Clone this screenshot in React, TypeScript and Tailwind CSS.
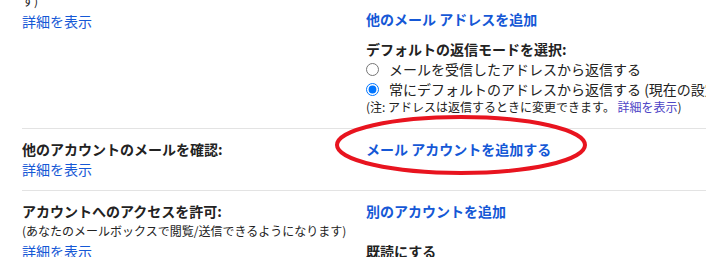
import React from 'react';

const font = { fontFamily: '"Noto Sans CJK JP", "Noto Sans", sans-serif' };

const Link = ({ children, bold = false }: { children: React.ReactNode; bold?: boolean }) => (
  <a href="#" className={`text-[#1558d6] no-underline ${bold ? 'font-bold' : ''}`}>
    {children}
  </a>
);

const App = () => {
  return (
    <div className="h-[257px] w-[706px] overflow-hidden bg-white text-[14px] leading-[20px] text-[#222]" style={font}>
      <div className="ml-[22px]">
        {/* 名前 (top of section scrolled out of view) */}
        <div className="flex border-b border-[#e3e3e3] pb-[13px] pt-[9px]">
          <div className="mt-[-18px] w-[344px] shrink-0">
            <div className="text-[12px]">す)</div>
            <Link>詳細を表示</Link>
          </div>
          <div>
            <div>
              <Link bold>他のメール アドレスを追加</Link>
            </div>
            <div className="mt-[10px] font-bold">デフォルトの返信モードを選択:</div>
            <label className="flex items-center whitespace-nowrap">
              <input type="radio" name="reply" className="mr-[10px] h-[13px] w-[13px]" />
              メールを受信したアドレスから返信する
            </label>
            <label className="flex items-center whitespace-nowrap">
              <input type="radio" name="reply" defaultChecked className="mr-[10px] h-[13px] w-[13px]" />
              常にデフォルトのアドレスから返信する (現在の設定: 既定のアドレス)
            </label>
            <div className="whitespace-nowrap text-[12px] leading-[16px]">
              (注: アドレスは返信するときに変更できます。 <a href="#" className="text-[#4d45c6]">詳細を表示</a>)
            </div>
          </div>
        </div>

        {/* 他のアカウントのメールを確認 */}
        <div className="flex border-b border-[#e3e3e3] pb-[11px] pt-[10px]">
          <div className="w-[344px] shrink-0">
            <div className="font-bold">他のアカウントのメールを確認:</div>
            <Link>詳細を表示</Link>
          </div>
          <div className="relative">
            <Link bold>メール アカウントを追加する</Link>
            <svg
              className="pointer-events-none absolute left-[-32px] top-[-25px]"
              width="256"
              height="62"
              viewBox="0 0 256 62"
            >
              <ellipse cx="127" cy="31" rx="124" ry="28" fill="none" stroke="#e8141f" strokeWidth="4" />
            </svg>
          </div>
        </div>

        {/* アカウントへのアクセスを許可 */}
        <div className="flex pt-[10px]">
          <div className="w-[344px] shrink-0">
            <div className="font-bold">アカウントへのアクセスを許可:</div>
            <div className="whitespace-nowrap text-[12px]">(あなたのメールボックスで閲覧/送信できるようになります)</div>
            <Link>詳細を表示</Link>
          </div>
          <div>
            <div>
              <Link bold>別のアカウントを追加</Link>
            </div>
            <div className="mt-[20px] font-bold">既読にする</div>
          </div>
        </div>
      </div>
    </div>
  );
};

export default App;
